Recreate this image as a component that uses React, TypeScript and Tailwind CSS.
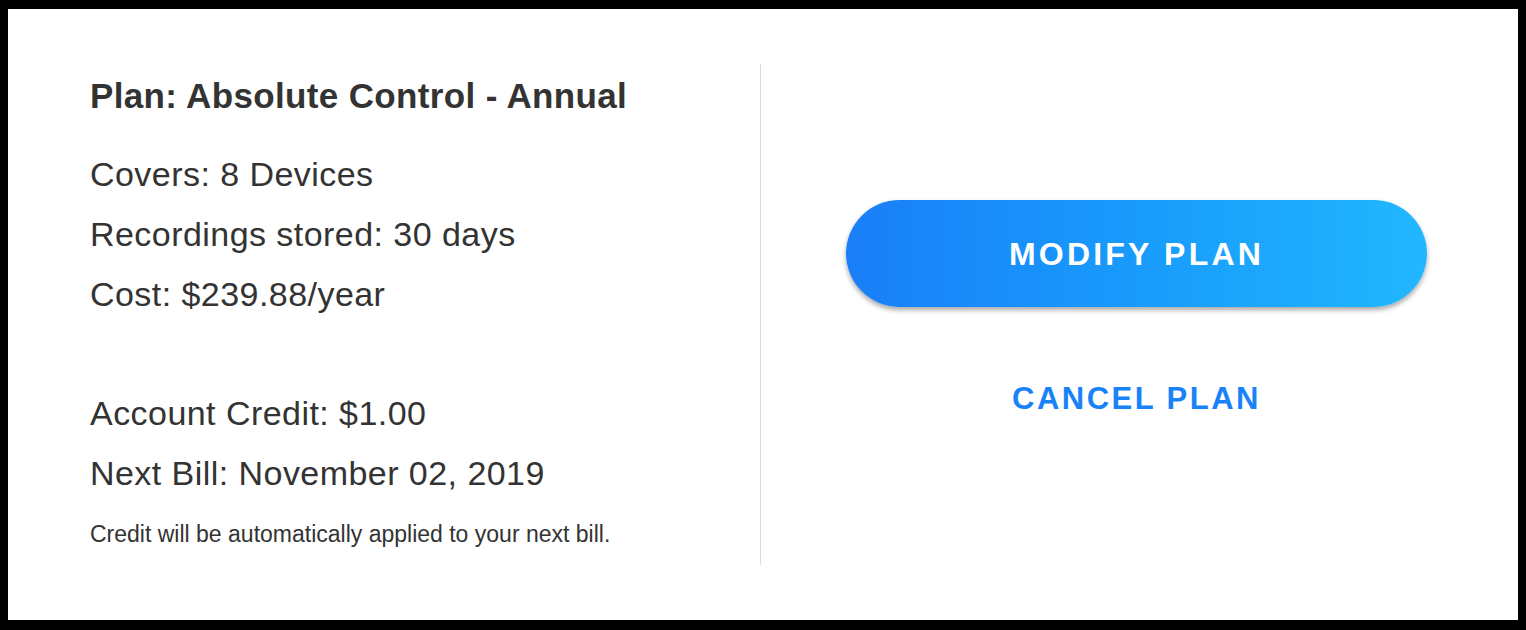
const PlanDetails = () => {
  return (
    <div className="w-[752px] pl-[82px] pt-[12px] text-[#333333]">
      <h2 className="text-[35px] font-bold leading-[40px] tracking-[0.35px]">
        Plan: Absolute Control - Annual
      </h2>
      <div className="mt-[28px] text-[34px] leading-[60px] tracking-[0.45px]">
        <p>Covers: 8 Devices</p>
        <p>Recordings stored: 30 days</p>
        <p>Cost: $239.88/year</p>
      </div>
      <div className="mt-[59px] text-[34px] leading-[60px] tracking-[0.45px]">
        <p>Account Credit: $1.00</p>
        <p>Next Bill: November 02, 2019</p>
      </div>
      <p className="mt-[16px] text-[23px] leading-[30px]">
        Credit will be automatically applied to your next bill.
      </p>
    </div>
  );
};

const PlanActions = () => {
  return (
    <div className="flex-1 flex flex-col items-center pt-[136px] pr-[6px]">
      <button
        type="button"
        className="w-[581px] h-[107px] rounded-full bg-gradient-to-r from-[#1a7ef8] to-[#21b7fe] text-white text-[32px] font-bold tracking-[0.1em] shadow-[0_3px_5px_rgba(0,0,0,0.35)]"
      >
        MODIFY PLAN
      </button>
      <button
        type="button"
        className="mt-[76px] text-[#1a82f8] text-[31px] font-bold tracking-[0.08em] leading-[32px]"
      >
        CANCEL PLAN
      </button>
    </div>
  );
};

export default function App() {
  return (
    <div
      className="w-[1526px] h-[630px] bg-black pt-[9px] pl-[8px] pr-[8px] pb-[10px]"
      style={{ fontFamily: '"Liberation Sans", Arial, sans-serif' }}
    >
      <div className="w-full h-full bg-white flex py-[55px]">
        <PlanDetails />
        <div className="w-px bg-[#dddddd]" />
        <PlanActions />
      </div>
    </div>
  );
}
